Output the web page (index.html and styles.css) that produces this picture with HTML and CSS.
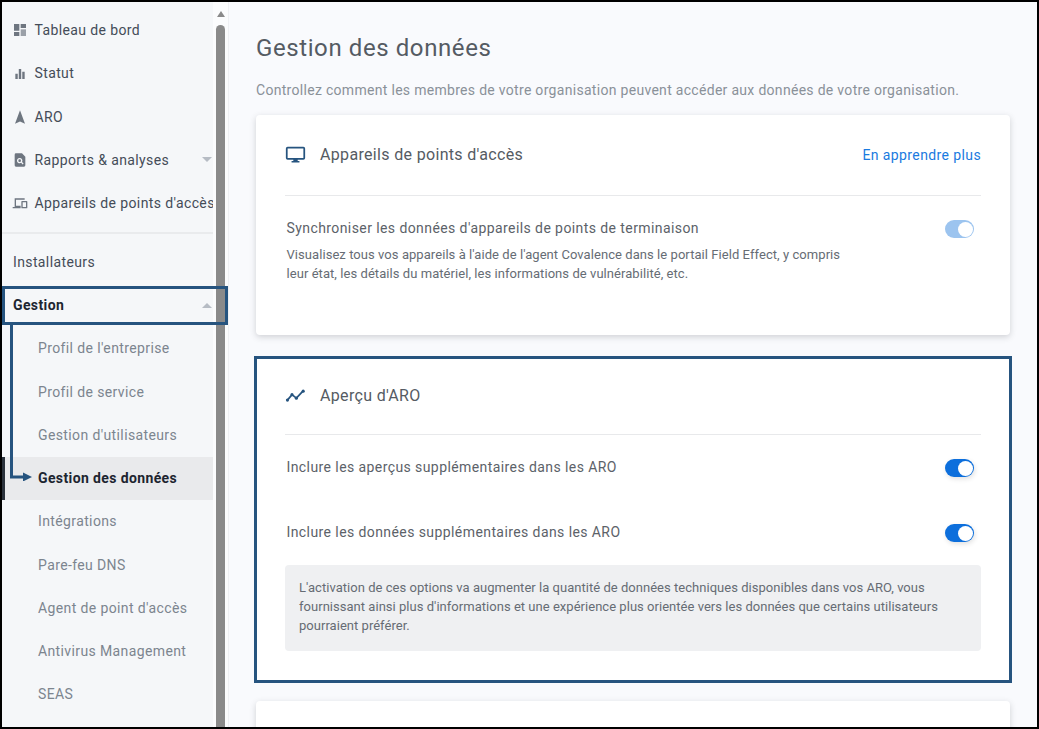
FILE: index.html
```html
<!DOCTYPE html>
<html lang="fr">
<head>
<meta charset="utf-8">
<title>Gestion des données</title>
<link rel="stylesheet" href="styles.css">
</head>
<body>
<div class="frame">
  <aside class="sidebar">
    <nav class="nav">
      <a class="row"><svg class="ico" viewBox="0 0 24 24"><path d="M3 3h8v10H3zM3 15h8v6H3zM13 3h8v6h-8z"/><path class="ico-light" d="M13 11h8v10h-8z"/></svg><span>Tableau de bord</span></a>
      <a class="row"><svg class="ico" viewBox="0 0 24 24"><path d="M5 13h3.6v8H5zM10.2 6h3.6v15h-3.6zM15.400 10H19v11h-3.600z"/></svg><span>Statut</span></a>
      <a class="row"><svg class="ico" viewBox="0 0 24 24"><path d="M12 2l7.500 20-7.500-3.200L4.500 22z"/></svg><span>ARO</span></a>
      <a class="row"><svg class="ico" viewBox="0 0 24 24"><path fill-rule="evenodd" d="M6 2h9l5 5v13a2 2 0 0 1-2 2H6a2 2 0 0 1-2-2V4a2 2 0 0 1 2-2zm5.500 7a4 4 0 1 0 2.200 7.300l2.300 2.300 1.400-1.400-2.300-2.300A4 4 0 0 0 11.500 9zm0 2a2 2 0 1 1 0 4 2 2 0 0 1 0-4z"/></svg><span>Rapports &amp; analyses</span><i class="caret down"></i></a>
      <a class="row"><svg class="ico" viewBox="0 0 24 24"><path fill-rule="evenodd" d="M4 5h15v2H6v9h7v4H1v-2h3V5zm11 4h7a1 1 0 0 1 1 1v9a1 1 0 0 1-1 1h-7a1 1 0 0 1-1-1v-9a1 1 0 0 1 1-1zm1 2v7h5v-7h-5z"/></svg><span>Appareils de points d'accès</span></a>
      <div class="divider"></div>
      <a class="row plain"><span>Installateurs</span></a>
      <a class="row plain strong"><span>Gestion</span><i class="caret up"></i></a>
      <a class="row sub"><span>Profil de l'entreprise</span></a>
      <a class="row sub"><span>Profil de service</span></a>
      <a class="row sub"><span>Gestion d'utilisateurs</span></a>
      <a class="row sub active"><span>Gestion des données</span></a>
      <a class="row sub"><span>Intégrations</span></a>
      <a class="row sub"><span>Pare-feu DNS</span></a>
      <a class="row sub"><span>Agent de point d'accès</span></a>
      <a class="row sub"><span>Antivirus Management</span></a>
      <a class="row sub"><span>SEAS</span></a>
    </nav>
    <div class="scrollbar"><i class="sb-arrow"></i><i class="sb-thumb"></i></div>
  </aside>

  <main class="main">
    <h1 class="title">Gestion des données</h1>
    <p class="lead">Controllez comment les membres de votre organisation peuvent accéder aux données de votre organisation.</p>

    <section class="card first">
      <header class="card-head">
        <svg class="card-ico" viewBox="0 0 24 24"><path d="M21 3H3a2 2 0 0 0-2 2v11a2 2 0 0 0 2 2h6.500v1.500H7.500V21h9v-1.500h-2V18H21a2 2 0 0 0 2-2V5a2 2 0 0 0-2-2zm0 13H3V5h18z"/></svg>
        <h2>Appareils de points d'accès</h2>
        <a class="link">En apprendre plus</a>
      </header>
      <div class="setting top">
        <div class="setting-text">
          <h3>Synchroniser les données d'appareils de points de terminaison</h3>
          <p>Visualisez tous vos appareils à l'aide de l'agent Covalence dans le portail Field Effect, y compris leur état, les détails du matériel, les informations de vulnérabilité, etc.</p>
        </div>
        <span class="toggle muted"></span>
      </div>
    </section>

    <section class="card second">
      <header class="card-head">
        <svg class="card-ico" viewBox="0 0 24 24"><path d="M2.500 17.500L8 11l5 4 7.500-8" fill="none" stroke="#26547f" stroke-width="2"/><circle cx="2.800" cy="17.200" r="1.800"/><circle cx="8" cy="11" r="1.800"/><circle cx="13" cy="15" r="1.800"/><circle cx="20.800" cy="7" r="1.800"/></svg>
        <h2>Aperçu d'ARO</h2>
      </header>
      <div class="setting one"><h3>Inclure les aperçus supplémentaires dans les ARO</h3><span class="toggle"></span></div>
      <div class="setting two"><h3>Inclure les données supplémentaires dans les ARO</h3><span class="toggle"></span></div>
      <div class="note">L'activation de ces options va augmenter la quantité de données techniques disponibles dans vos ARO, vous fournissant ainsi plus d'informations et une expérience plus orientée vers les données que certains utilisateurs pourraient préférer.</div>
    </section>

    <section class="card third"></section>
  </main>

  <div class="callout-box"></div>
  <svg class="callout-arrow" viewBox="0 0 30 156" width="30" height="156"><path d="M2.500 0V152H16" fill="none" stroke="#26547f" stroke-width="3"/><path d="M14 147.500l9 4.500-9 4.500z"/></svg>
</div>
</body>
</html>
```
FILE: styles.css
```css
* { box-sizing: border-box; }
html, body { margin: 0; padding: 0; }
body { font-family: Roboto, "Liberation Sans", sans-serif; background: #000; }
.frame {
  position: relative;
  width: 1039px;
  height: 729px;
  border: 2px solid #000;
  display: flex;
  overflow: hidden;
  background: #f9fafd;
}

/* Sidebar */
.sidebar {
  width: 227px;
  flex: none;
  display: flex;
  background: #fff;
  border-right: 1px solid #eef0f3;
}
.nav {
  width: 211px;
  flex: none;
  padding-top: 6.500px;
  background: #f5f7f9;
}
.row {
  display: flex;
  align-items: center;
  height: 43.250px;
  padding-left: 11px;
  font-size: 14px;
  letter-spacing: 0.38px;
  color: #444c58;
  white-space: nowrap;
  overflow: hidden;
}
.ico { width: 16px; height: 16px; flex: none; margin-left: -1px; margin-right: 6.500px; fill: #6e7680; }
.ico-light { fill: #9aa0a8; }
.caret { position: absolute; left: 200px; width: 0; height: 0; border-left: 5px solid transparent; border-right: 5px solid transparent; }
.caret.down { border-top: 5px solid #b6bcc4; }
.caret.up { border-bottom: 5px solid #b6bcc4; }
.divider { height: 2px; margin: 7px 0 6.500px; background: #e9ebed; }
.row.strong { font-weight: 700; color: #1d2530; }
.row.sub { padding-left: 36px; color: #7c858f; }
.row.active { background: #e9eaec; border-left: 3px solid #2a313b; padding-left: 33px; font-weight: 700; color: #1d2530; }

.scrollbar { position: relative; width: 15px; padding: 0 3px; background: #fbfcfd; }
.sb-arrow { display: block; width: 0; height: 0; margin: 9px 0 0 0.500px; border-left: 4.500px solid transparent; border-right: 4.500px solid transparent; border-bottom: 6px solid #8a8a8a; }
.sb-thumb { display: block; width: 9px; height: 720px; margin-top: 8px; background: #8a8a8a; border-radius: 5px 5px 0 0; }

/* Main */
.main { flex: 1; min-width: 0; padding: 0 27px; }
.title { margin: 30px 0 0; font-size: 24px; line-height: 32px; font-weight: 400; color: #555b63; letter-spacing: 0.59px; }
.lead { margin: 16px 0 0; font-size: 14px; line-height: 20px; color: #8a9199; letter-spacing: 0.3px; white-space: nowrap; }
.card {
  background: #fff;
  border-radius: 4px;
  box-shadow: 0 2px 6px rgba(60, 64, 70, 0.22);
}
.first { margin-top: 15px; height: 220px; padding: 0 29px; width: 754px; }
.second {
  margin: 21px 0 0 -2px;
  width: 758px;
  height: 327px;
  padding: 0 28px;
  border: 3px solid #26547f;
  border-radius: 0;
  box-shadow: none;
}
.third { margin-top: 18px; height: 60px; width: 754px; }

.card-head { display: flex; align-items: center; height: 81px; padding-bottom: 1px; border-bottom: 1px solid #e8e9eb; }
.second .card-head { height: 76px; padding-bottom: 3px; }
.card-ico { width: 21px; height: 21px; flex: none; fill: #26547f; margin-right: 14px; }
.card-head h2 { margin: 0; font-size: 16px; font-weight: 400; color: #555b63; letter-spacing: 0.33px; }
.link { margin-left: auto; font-size: 14px; color: #1a7ae0; letter-spacing: 0.39px; }

.setting { display: flex; justify-content: space-between; padding: 0 7px 0 1.500px; }
.setting h3 { margin: 0; font-size: 14px; line-height: 20px; font-weight: 400; color: #5c6269; letter-spacing: 0.415px; }
.setting.top { padding-top: 22px; }
.setting.top p { margin: 8px 0 0; width: 570px; font-size: 13px; line-height: 18.500px; color: #666c74; letter-spacing: 0.06px; }
.setting.one { padding-top: 22px; height: 65px; }
.setting.two { padding-top: 22px; height: 65px; }
.toggle {
  position: relative;
  flex: none;
  width: 29px;
  height: 18px;
  margin-top: 2px;
  border-radius: 9px;
  background: #0d6fdc;
  box-shadow: 1px 2px 5px rgba(0, 0, 0, 0.12);
}
.toggle::after {
  content: "";
  position: absolute;
  top: 1.500px;
  right: 1px;
  width: 15px;
  height: 15px;
  border-radius: 50%;
  background: #fff;
}
.toggle.muted { background: #9cc4ef; box-shadow: none; }
.note {
  height: 86px;
  padding: 13px 14px;
  border-radius: 4px;
  background: #eff0f2;
  font-size: 13px;
  line-height: 19px;
  color: #666c74;
  letter-spacing: 0.03px;
}

/* Annotation overlay */
.callout-box {
  position: absolute;
  left: 0;
  top: 284px;
  width: 226px;
  height: 39px;
  border: 3px solid #26547f;
}
.callout-arrow { position: absolute; left: 7px; top: 323px; fill: #26547f; }
```
